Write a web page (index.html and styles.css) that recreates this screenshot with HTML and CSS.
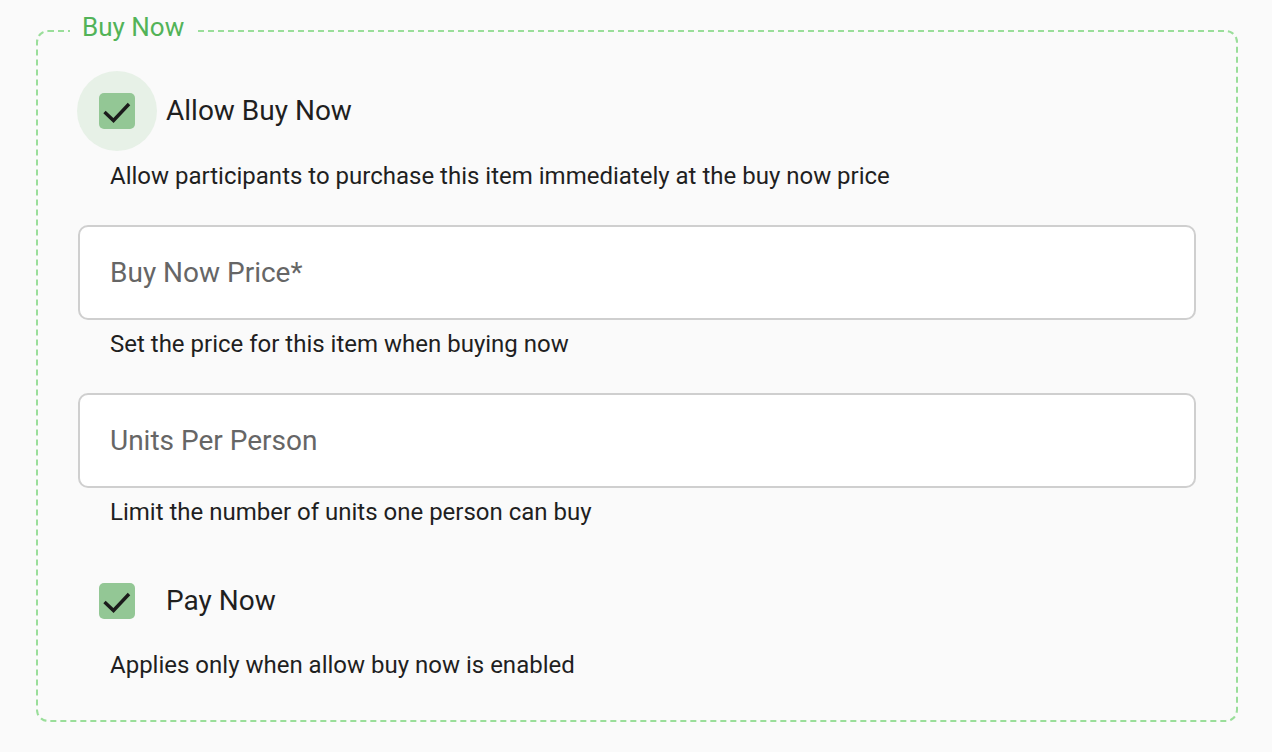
FILE: index.html
```html
<!DOCTYPE html>
<html lang="en">
<head>
<meta charset="utf-8">
<title>Buy Now</title>
<link rel="stylesheet" href="styles.css">
</head>
<body>
<div class="page">
  <fieldset class="group">
    <legend class="group-title">Buy Now</legend>

    <label class="check-row">
      <span class="check-ripple focused">
        <svg class="check-icon" width="36" height="36" viewBox="0 0 36 36" aria-hidden="true">
          <rect x="0" y="0" width="36" height="36" rx="5" fill="#93c795"/>
          <polyline points="5.5,19 14.5,27.5 30,11" fill="none" stroke="#1b1b1b" stroke-width="3.4"/>
        </svg>
      </span>
      <span class="check-label">Allow Buy Now</span>
    </label>
    <p class="helper helper-first">Allow participants to purchase this item immediately at the buy now price</p>

    <div class="field">
      <span class="placeholder">Buy Now Price*</span>
    </div>
    <p class="helper">Set the price for this item when buying now</p>

    <div class="field">
      <span class="placeholder">Units Per Person</span>
    </div>
    <p class="helper">Limit the number of units one person can buy</p>

    <label class="check-row">
      <span class="check-ripple">
        <svg class="check-icon" width="36" height="36" viewBox="0 0 36 36" aria-hidden="true">
          <rect x="0" y="0" width="36" height="36" rx="5" fill="#93c795"/>
          <polyline points="5.5,19 14.5,27.5 30,11" fill="none" stroke="#1b1b1b" stroke-width="3.4"/>
        </svg>
      </span>
      <span class="check-label">Pay Now</span>
    </label>
    <p class="helper helper-last">Applies only when allow buy now is enabled</p>
  </fieldset>
</div>
</body>
</html>
```

FILE: styles.css
```css
* { box-sizing: border-box; }

html, body {
  margin: 0;
  padding: 0;
  background: #fafafa;
}

body {
  font-family: Roboto, "Noto Sans", "Liberation Sans", sans-serif;
  color: #1f1f1f;
}

.page {
  padding: 13px 34px 0 36px;
}

.group {
  margin: 0;
  border: 2px dashed #9ade9a;
  border-radius: 12px;
  padding: 22px 40px 41px 40px;
  display: flex;
  flex-direction: column;
  min-width: 0;
}

.group-title {
  margin-left: -8px;
  padding: 0 12px 8px 12px;
  font-size: 26px;
  line-height: 28px;
  color: #52b358;
}

.check-row {
  display: flex;
  align-items: center;
  height: 80px;
}

.check-ripple {
  width: 80px;
  height: 80px;
  border-radius: 50%;
  display: flex;
  align-items: center;
  justify-content: center;
  flex: none;
  margin-left: -1px;
}

.check-ripple.focused {
  background: #e7f1e7;
}

.check-icon {
  display: block;
}

.check-label {
  font-size: 28px;
  line-height: 32px;
  margin-left: 9px;
  color: #1f1f1f;
}

.helper {
  margin: 0;
  padding-left: 32px;
  font-size: 24px;
  line-height: 28px;
  color: #1f1f1f;
}

.helper-first {
  margin-top: 11px;
  margin-bottom: 35px;
}

.field {
  height: 95px;
  background: #fff;
  border: 2px solid #cfcfcf;
  border-radius: 10px;
  display: flex;
  align-items: center;
  padding-left: 30px;
}

.field + .helper {
  margin-top: 10px;
  margin-bottom: 35px;
}

.placeholder {
  font-size: 28px;
  line-height: 32px;
  color: #666;
}

.helper-last {
  margin-top: 10px;
}
```
